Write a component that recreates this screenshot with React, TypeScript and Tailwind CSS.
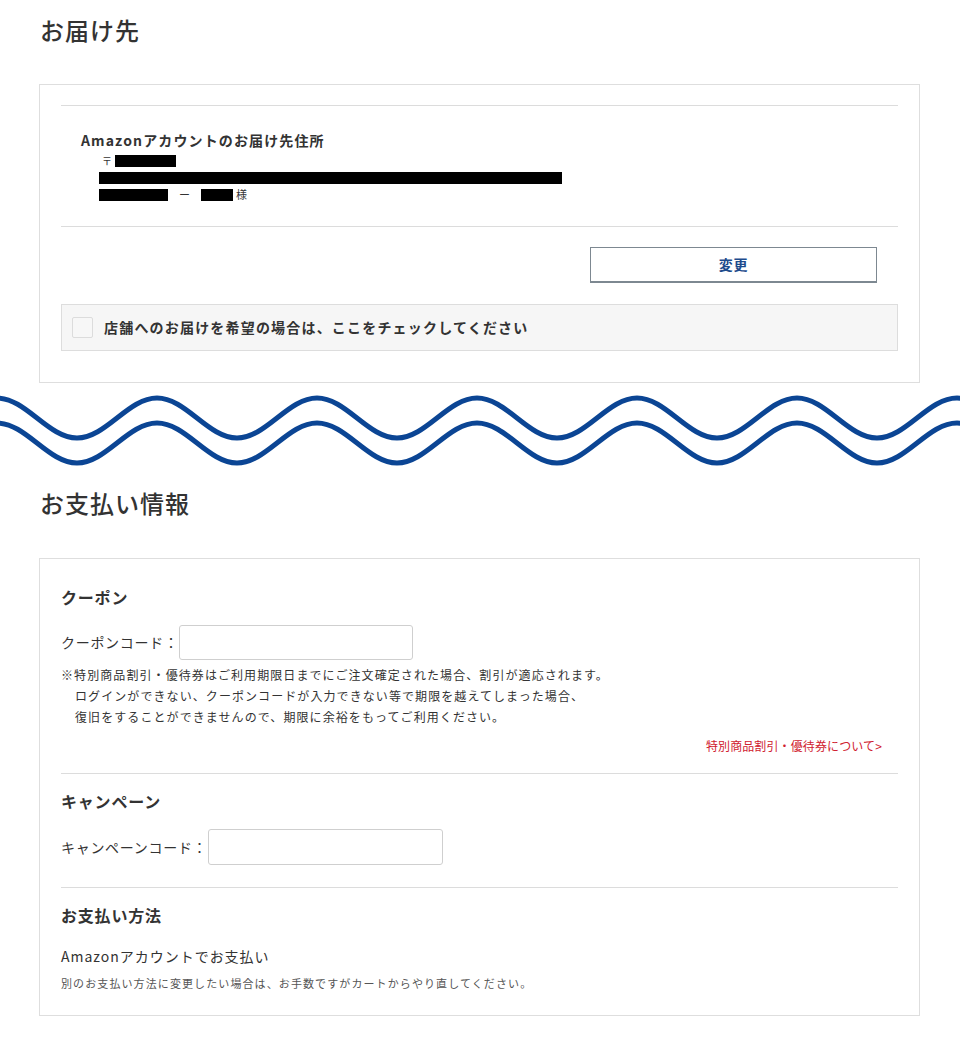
import React from 'react';

const font = { fontFamily: '"Noto Sans CJK JP", "Noto Sans", sans-serif' };

// half period 80px, crests at x = -3 + 160n
function wavePath(top: number, bottom: number) {
  let d = `M -83 ${bottom} C -54 ${bottom} -32 ${top} -3 ${top}`;
  let x = -3;
  let up = true;
  while (x < 1000) {
    const nx = x + 80;
    const y = up ? bottom : top;
    d += ` S ${nx - 29} ${y} ${nx} ${y}`;
    x = nx;
    up = !up;
  }
  return d;
}

function Wave() {
  return (
    <svg className="block mt-[7px]" width="960" height="80" viewBox="0 0 960 80" fill="none">
      <path d={wavePath(8, 48)} stroke="#0b4594" strokeWidth="5" />
      <path d={wavePath(33, 73)} stroke="#0b4594" strokeWidth="5" />
    </svg>
  );
}

function Redacted({ w }: { w: number }) {
  return <span className="inline-block h-[12px] bg-black" style={{ width: w }} />;
}

export default function App() {
  return (
    <div className="w-[960px] bg-white text-[#333] pt-[12px] pb-[28px]" style={font}>
      <div className="pl-[39px] pr-[40px]">
        <h2 className="text-[24px] leading-[36px] font-medium tracking-[1px] pl-px">お届け先</h2>

        {/* delivery card */}
        <div className="mt-[36px] border border-[#dedede] px-[21px] pt-[20px] pb-[31px]">
          <div className="border-t border-[#dcdcdc] pt-[24px] pb-[23px] pl-[20px]">
            <p className="text-[14px] leading-[20px] font-bold tracking-[0.08em]">Amazonアカウントのお届け先住所</p>
            <div className="mt-[2px] pl-[18px] text-[11px] leading-[17px]">
              <div className="flex items-center h-[17px]">
                <span className="w-[16px] pl-[3px] text-[10px]">〒</span>
                <Redacted w={61} />
              </div>
              <div className="flex items-center h-[17px]">
                <Redacted w={463} />
              </div>
              <div className="flex items-center h-[17px]">
                <Redacted w={69} />
                <span className="w-[33px] text-center">ー</span>
                <Redacted w={32} />
                <span className="pl-[3px]">様</span>
              </div>
            </div>
          </div>
          <div className="border-t border-[#dcdcdc] pt-[20px] flex justify-end pr-[21px]">
            <button className="w-[287px] h-[36px] border border-b-2 border-[#7d8891] bg-white text-[14px] font-bold text-[#1d4b8c] tracking-[0.06em]">
              変更
            </button>
          </div>
          <label className="mt-[21px] flex items-center h-[47px] border border-[#dddddd] bg-[#f6f6f6] pl-[10px]">
            <span className="w-[21px] h-[21px] border border-[#dcdcdc] bg-[#f7f7f7] rounded-[2px]" />
            <span className="ml-[11px] text-[14px] font-bold tracking-[0.085em]">店舗へのお届けを希望の場合は、ここをチェックしてください</span>
          </label>
        </div>
      </div>

      <Wave />

      <div className="pl-[39px] pr-[40px]">
        <h2 className="mt-[15px] text-[24px] leading-[36px] font-medium tracking-[1px] pl-px">お支払い情報</h2>

        {/* payment card */}
        <div className="mt-[37px] border border-[#dedede] px-[21px] pt-[26px] pb-[24px]">
          <h3 className="text-[16px] leading-[24px] font-bold tracking-[0.05em]">クーポン</h3>
          <div className="mt-[16px] flex items-center">
            <span className="text-[14px] tracking-[0.05em]">クーポンコード：</span>
            <input className="w-[234px] h-[35px] border border-[#cfcfcf] rounded-[3px] outline-none" />
          </div>
          <div className="mt-[4px] text-[12px] leading-[21px] tracking-[0.09em]">
            <p>※特別商品割引・優待券はご利用期限日までにご注文確定された場合、割引が適応されます。</p>
            <p className="pl-[14px]">ログインができない、クーポンコードが入力できない等で期限を越えてしまった場合、</p>
            <p className="pl-[14px]">復旧をすることができませんので、期限に余裕をもってご利用ください。</p>
          </div>
          <div className="mt-[8px] flex justify-end pr-[16px]">
            <a className="text-[12px] leading-[21px] text-[#d0212f] tracking-[0.01em]">特別商品割引・優待券について&gt;</a>
          </div>

          <div className="mt-[17px] border-t border-[#dcdcdc] pt-[15px]">
            <h3 className="text-[16px] leading-[24px] font-bold tracking-[0.05em]">キャンペーン</h3>
            <div className="mt-[16px] flex items-center">
              <span className="text-[14px] tracking-[0.05em]">キャンペーンコード：</span>
              <input className="ml-[1px] w-[235px] h-[36px] border border-[#cfcfcf] rounded-[3px] outline-none" />
            </div>
          </div>

          <div className="mt-[22px] border-t border-[#dcdcdc] pt-[15px]">
            <h3 className="text-[16px] leading-[24px] font-bold tracking-[0.05em]">お支払い方法</h3>
            <p className="mt-[19px] text-[14px] leading-[20px] tracking-[0.07em]">Amazonアカウントでお支払い</p>
            <p className="mt-[9px] text-[11px] leading-[16px] text-[#555] tracking-[0.1em]">別のお支払い方法に変更したい場合は、お手数ですがカートからやり直してください。</p>
          </div>
        </div>
      </div>
    </div>
  );
}
